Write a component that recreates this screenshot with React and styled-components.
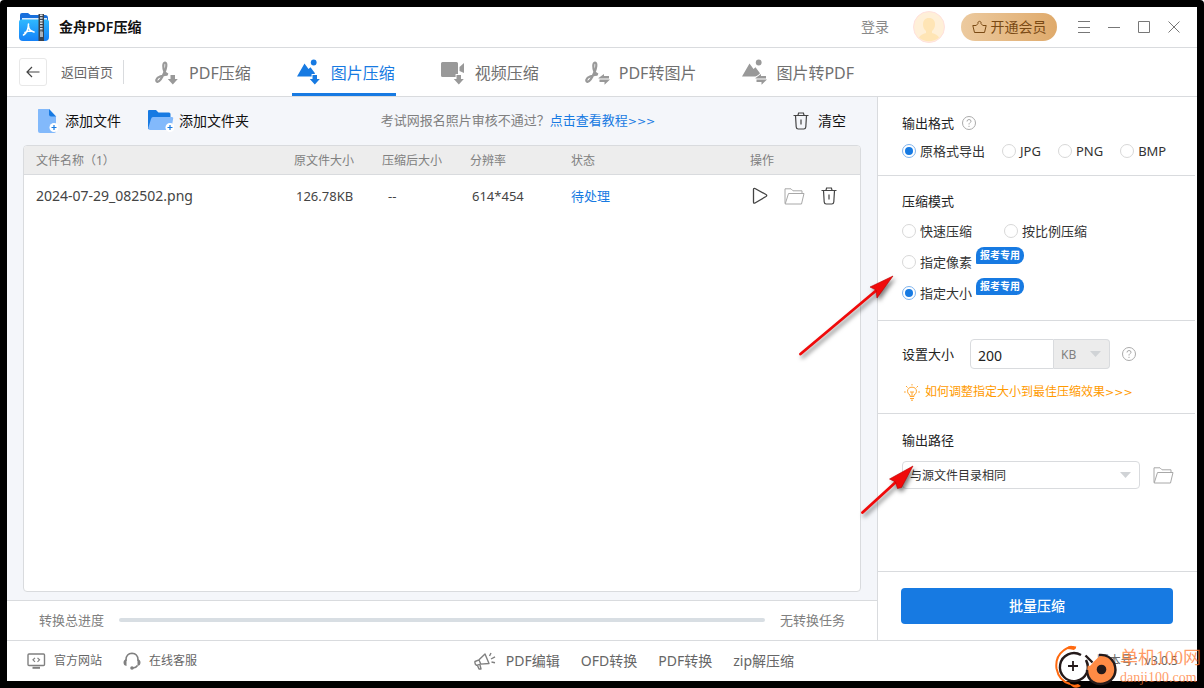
import React from 'react';
import styled, { createGlobalStyle, css } from 'styled-components';

const color = {
  blue: '#177ae2',
  line: '#d9dbde',
  soft: '#f4f6fa',
  text: '#333333',
  grey: '#666666',
  faint: '#808080',
  orange: '#ff9a00',
};

const GlobalStyle = createGlobalStyle`
  *, *::before, *::after { box-sizing: border-box; }
  body {
    margin: 0;
    background: #fff;
    color: ${color.text};
    font: 13px/20px "Noto Sans", "Noto Sans CJK SC", sans-serif;
  }
  button, input, select { font: inherit; color: inherit; margin: 0; }
  button { border: 0; padding: 0; background: none; cursor: pointer; }
  a { color: inherit; text-decoration: none; }
  svg { display: block; flex: none; }
`;

const Frame = styled.div`
  position: relative;
  display: flex;
  min-height: 100vh;
  padding: 7px;
  background: #000;
  border-radius: 4px 4px 0 0;
  overflow: hidden;
`;

const Window = styled.div`
  flex: 1;
  min-width: 0;
  display: flex;
  flex-direction: column;
  background: #fff;
`;

const TitleBar = styled.header`
  display: flex;
  align-items: center;
  height: 41px;
  padding: 0 16px 0 12px;
  border-bottom: 1px solid ${color.line};
`;

const AppName = styled.h1`
  flex: 1;
  margin: 0 0 0 10px;
  font-size: 14px;
  line-height: 20px;
  font-weight: 600;
  color: #111;
`;

const LoginButton = styled.button`
  font-size: 14px;
  color: #888;
`;

const Avatar = styled.button`
  margin: 0 16px 0 24px;
`;

const VipButton = styled.button`
  display: flex;
  align-items: center;
  justify-content: center;
  gap: 4px;
  width: 96px;
  height: 28px;
  border-radius: 14px;
  background: linear-gradient(90deg, #ecca9f, #dfaa6b);
  color: #7a4a14;
  font-size: 14px;
`;

const WindowControls = styled.div`
  display: flex;
  gap: 16px;
  margin-left: 20px;
`;

const Nav = styled.nav`
  display: flex;
  align-items: center;
  height: 49px;
  padding-left: 12px;
  border-bottom: 1px solid ${color.line};
`;

const BackButton = styled.button`
  display: flex;
  align-items: center;
  gap: 14px;
  height: 24px;
  padding-right: 10px;
  border-right: 1px solid ${color.line};
  color: ${color.grey};
`;

const BackBox = styled.span`
  display: grid;
  place-items: center;
  width: 28px;
  height: 28px;
  border: 1px solid #e8e8e8;
  border-radius: 3px;
`;

const Tabs = styled.div`
  display: flex;
  align-self: stretch;
  gap: 40px;
  margin-left: 26px;
`;

const Tab = styled.button`
  display: flex;
  align-items: center;
  gap: 10px;
  padding: 5px 1px 0 5px;
  border-bottom: 3px solid ${(p) => (p.$active ? color.blue : 'transparent')};
  font-size: 16px;
  color: ${(p) => (p.$active ? color.blue : '#707070')};
  svg { color: ${(p) => (p.$active ? color.blue : '#999')}; }
`;

const Main = styled.main`
  flex: 1;
  display: flex;
`;

const Workspace = styled.section`
  flex: 1;
  min-width: 0;
  display: flex;
  flex-direction: column;
  background: ${color.soft};
`;

const Toolbar = styled.div`
  display: flex;
  align-items: center;
  justify-content: space-between;
  height: 48px;
  padding: 0 31px 0 30px;
`;

const ToolGroup = styled.div`
  display: flex;
  gap: 27px;
`;

const ToolButton = styled.button`
  display: flex;
  align-items: center;
  gap: ${(p) => p.$gap || 5}px;
  font-size: 14px;
  color: #111;
`;

const Notice = styled.p`
  margin: 0 6px 0 0;
  color: ${color.faint};
`;

const NoticeLink = styled.a`
  color: ${color.blue};
`;

const Chevrons = styled.span`
  font-family: "DejaVu Sans", sans-serif;
  font-size: 11px;
`;

const TableCard = styled.div`
  flex: 1;
  margin: 0 16px 8px;
  border: 1px solid ${color.line};
  border-radius: 4px;
  background: #fff;
  overflow: hidden;
`;

const FileTable = styled.table`
  width: 100%;
  table-layout: fixed;
  border-collapse: separate;
  border-spacing: 0;
`;

const HeadCell = styled.th`
  width: ${(p) => (p.$width ? `${p.$width}px` : 'auto')};
  height: 29px;
  padding: 2px 0 0 12px;
  border-bottom: 1px solid ${color.line};
  background: #ededed;
  font-size: 12px;
  font-weight: 400;
  text-align: left;
  color: ${color.faint};
`;

const Cell = styled.td`
  height: 42px;
  padding: 0 0 0 ${(p) => p.$inset || 12}px;
  font-size: ${(p) => (p.$name ? 14 : 13)}px;
  color: ${(p) => (p.$link ? color.blue : '#444')};
`;

const RowActions = styled.div`
  display: flex;
  align-items: center;
  gap: 16px;
`;

const ProgressBar = styled.div`
  display: flex;
  align-items: center;
  gap: 15px;
  height: 40px;
  padding: 0 32px 2px;
  border-top: 1px solid ${color.line};
  background: #fff;
  color: ${color.faint};
`;

const Progress = styled.progress`
  flex: 1;
  min-width: 0;
  height: 4px;
  appearance: none;
  border: 0;
  border-radius: 2px;
  overflow: hidden;
  background: #d8dee3;
  &::-webkit-progress-bar { background: #d8dee3; }
  &::-webkit-progress-value { background: ${color.blue}; }
`;

const SidePanel = styled.aside`
  position: relative;
  width: 320px;
  display: flex;
  flex-direction: column;
  border-left: 1px solid ${color.line};
`;

const Group = styled.section`
  margin-right: 2px;
  padding: ${(p) => p.$pad || '12px 0 10px'};
  padding-left: 24px;
  ${(p) => (p.$grow ? css`flex: 1;` : css`border-bottom: 1px solid ${color.line};`)}
`;

const GroupTitle = styled.h2`
  display: flex;
  align-items: center;
  gap: 8px;
  margin: 0;
  font-size: 13px;
  font-weight: 400;
  line-height: 28px;
  color: #222;
`;

const OptionRow = styled.div`
  display: flex;
  align-items: center;
  gap: ${(p) => p.$gap || 17}px;
  height: ${(p) => p.$height || 31}px;
`;

const Option = styled.label`
  display: flex;
  align-items: center;
  gap: 4px;
  white-space: nowrap;
`;

const Radio = styled.input.attrs({ type: 'radio' })`
  appearance: none;
  width: 14px;
  height: 14px;
  padding: 2px;
  border: 1px solid #d8d8d8;
  border-radius: 50%;
  background-clip: content-box;
  &:checked {
    border-color: #7fb4ee;
    background-color: ${color.blue};
  }
`;

const Badge = styled.span`
  align-self: flex-start;
  width: 48px;
  height: 17px;
  margin-top: 1px;
  border-radius: 8px 8px 8px 1px;
  background: ${color.blue};
  color: #fff;
  font-size: 10px;
  font-weight: 600;
  line-height: 17px;
  text-align: center;
`;

const SizeField = styled.div`
  display: flex;
  align-items: center;
  color: #222;
`;

const SizeInput = styled.input`
  width: 84px;
  height: 30px;
  margin-left: 16px;
  padding: 2px 0 0 7px;
  border: 1px solid ${color.line};
  border-radius: 4px 0 0 4px;
  font-size: 14px;
  color: #222;
`;

const SelectWrap = styled.span`
  position: relative;
  width: ${(p) => (p.$unit ? '56px' : '238px')};
  svg {
    position: absolute;
    right: 9px;
    top: 50%;
    margin-top: -3px;
    pointer-events: none;
  }
`;

const Select = styled.select`
  display: block;
  width: 100%;
  height: 28px;
  padding: 1px 20px 0 7px;
  appearance: none;
  border: 1px solid ${color.line};
  border-radius: 4px;
  background: #fff;
  font-size: 12px;
  color: #333;
  ${(p) =>
    p.$unit &&
    css`
      height: 30px;
      border-left: 0;
      border-radius: 0 4px 4px 0;
      background: #ececec;
      color: ${color.faint};
    `}
`;

const HelpButton = styled.button`
  margin-left: ${(p) => (p.$spaced ? 12 : 0)}px;
`;

const HintLink = styled.a`
  display: flex;
  align-items: center;
  gap: 5px;
  height: 44px;
  padding: 2px 0 0 2px;
  font-size: 12px;
  color: ${color.orange};
`;

const PathRow = styled.div`
  display: flex;
  align-items: center;
  gap: 13px;
  margin-top: 7px;
`;

const StartArea = styled.div`
  padding: 16px 24px 16px 23px;
  border-top: 1px solid ${color.line};
`;

const StartButton = styled.button`
  width: 100%;
  height: 36px;
  border-radius: 4px;
  background: ${color.blue};
  color: #fff;
  font-size: 14px;
  font-weight: 500;
`;

const Footer = styled.footer`
  display: flex;
  align-items: center;
  justify-content: space-between;
  height: 41px;
  padding: 0 19px 0 20px;
  border-top: 1px solid ${color.line};
  font-size: 12px;
  color: ${color.grey};
`;

const FooterLinks = styled.div`
  display: flex;
  align-items: center;
  gap: 21px;
  ${(p) => p.$products && css`margin-right: 26px; font-size: 14px;`}
`;

const FooterLink = styled.a`
  display: flex;
  align-items: center;
  gap: ${(p) => p.$gap || 8}px;
`;

const Pointer = styled.svg`
  position: absolute;
  left: ${(p) => p.$left}px;
  top: ${(p) => p.$top}px;
  overflow: visible;
  pointer-events: none;
  filter: drop-shadow(2px 3px 2px rgba(0, 0, 0, 0.5));
`;

const Watermark = styled.div`
  position: absolute;
  right: 0;
  bottom: 0;
  display: flex;
  align-items: flex-end;
  gap: 3px;
  pointer-events: none;
`;

const WatermarkText = styled.div`
  width: 84px;
  font-family: "Liberation Serif", "Noto Sans CJK SC", serif;
  font-size: ${(p) => (p.$small ? 14 : 18)}px;
  line-height: 20px;
  white-space: nowrap;
  color: rgba(255, 122, 50, 0.75);
`;

const pdfStroke =
  'M9.5 11C7.8 7 7.800 1.800 10 1.500C12.500 2 11 8 9.500 11C7.500 16 5 20.500 2.500 20.800C.3 20.500 1 17 5 15.500C8 14.300 11 13.300 12.500 14M9.500 10.500C10.300 12 11.500 13 13 13.500';
const downArrow = 'M15.500 14h4.500v4h2.800l-5 5.500-5-5.500h2.700z';
const swapArrows = 'M13.500 17l5.500-4v2h5v2.500H13.500zM25 18.500H14.500v2.500h5v2.800z';
const photo = 'M0 15.500L7.500 2.500l4 5.500 2-1.800 4.300 5.800v3.500z';

const CornerGlyph = ({ d }) => (
  <path d={d} fill="currentColor" stroke="#fff" strokeWidth="1.800" paintOrder="stroke" />
);

const PdfGlyph = ({ corner }) => (
  <svg width="24" height="24" viewBox="0 0 24 24" overflow="visible" aria-hidden="true">
    <path d={pdfStroke} fill="none" stroke="currentColor" strokeWidth="2.200" />
    <CornerGlyph d={corner} />
  </svg>
);

const PhotoGlyph = ({ corner }) => (
  <svg width="24" height="24" viewBox="0 0 24 24" overflow="visible" aria-hidden="true">
    <path d={photo} fill="currentColor" />
    <circle cx="16.700" cy="1.500" r="2.900" fill="currentColor" />
    <CornerGlyph d={corner} />
  </svg>
);

const VideoGlyph = () => (
  <svg width="24" height="24" viewBox="0 0 24 24" aria-hidden="true">
    <path d="M1.500 1h14a1.500 1.500 0 0 1 1.500 1.500V16H1.500A1.500 1.500 0 0 1 0 14.500v-12A1.500 1.500 0 0 1 1.500 1zM18.500 6L23 2v10l-4.500-2z" fill="currentColor" />
    <CornerGlyph d={downArrow} />
  </svg>
);

const Logo = () => (
  <svg width="30" height="30" viewBox="0 0 30 30" aria-hidden="true">
    <defs>
      <linearGradient id="logoFront" x1="0" y1="0" x2="0" y2="1">
        <stop offset="0" stopColor="#2fb9ff" />
        <stop offset="1" stopColor="#1581f7" />
      </linearGradient>
    </defs>
    <path d="M1 3q0-2 2-2h6l2.500 2H26q3 0 3 3v10H1z" fill="#176fdc" />
    <path d="M3 6h25v4H3z" fill="#d8ecff" />
    <path d="M0 10q0-2.500 2.500-2.500h25Q30 7.500 30 10v15q0 4-4 4H4q-4 0-4-4z" fill="url(#logoFront)" />
    <path d="M19.500 2h5.500v27h-5.500z" fill="#3b424c" />
    <path d="M22.300 2.500v17" stroke="#dfe5ea" strokeWidth="2.600" strokeDasharray="1.500 1.200" />
    <path d="M21 20h3v5h-3z" fill="#a9b2bc" />
    <path d="M9.500 12c0 5-2 9-5 11M9.500 14c0 3 2 5 5.500 6M6 20.500c2-1.200 4-1.600 7-1.500" fill="none" stroke="#fff" strokeWidth="1.600" strokeLinecap="round" />
  </svg>
);

const AvatarGlyph = () => (
  <svg width="32" height="32" viewBox="0 0 32 32" aria-hidden="true">
    <circle cx="16" cy="16" r="15.500" fill="#fff0d8" stroke="#ffe0dc" />
    <path d="M16 7c4 0 6 2.500 6 6.500 0 3-1.200 5-3 6.500v2c3 1 6 2 7 4.500-5.500 5-14.500 5-20 0 1-2.500 4-3.500 7-4.500v-2c-1.800-1.500-3-3.500-3-6.500C10 9.500 12 7 16 7z" fill="#ffe5b5" />
  </svg>
);

const CrownGlyph = () => (
  <svg width="15" height="14" viewBox="0 0 15 14" fill="none" stroke="currentColor" strokeLinejoin="round" aria-hidden="true">
    <path d="M2.500 12.500L.8 5.500h3.400L6 3.500a1.600 1.600 0 1 1 3 0l1.800 2h3.400l-1.700 7z" />
  </svg>
);

const ControlGlyph = ({ d }) => (
  <svg width="14" height="14" viewBox="0 0 14 14" fill="none" stroke="#777" aria-hidden="true">
    <path d={d} />
  </svg>
);

const PlusBadge = ({ x, y }) => (
  <g transform={`translate(${x} ${y})`}>
    <circle r="4.500" fill="#fff" />
    <path d="M-2.500 0h5M0-2.500v5" stroke={color.blue} strokeWidth="1.200" />
  </g>
);

const FileGlyph = () => (
  <svg width="23" height="24" viewBox="0 0 23 24" aria-hidden="true">
    <path d="M1.500 0H12l7 7.500V22q0 2-2 2H3q-2 0-2-2V1q0-1 .5-1z" fill="#82b9fb" />
    <path d="M12 0l7 7.500h-5q-2 0-2-2z" fill={color.blue} />
    <PlusBadge x={17} y={18.5} />
  </svg>
);

const AddFolderGlyph = () => (
  <svg width="26" height="24" viewBox="0 0 26 24" aria-hidden="true">
    <path d="M0 2q0-1 1-1h7l2.500 2.500H21q1.500 0 1.500 1.500v5L2 20H0z" fill={color.blue} />
    <path d="M5 8h19q1.500 0 1.200 1.500L23.500 19q-.3 2-2 2H2q-2 0-1.700-2L3 10q.5-2 2-2z" fill="#82b9fb" />
    <PlusBadge x={22} y={18.5} />
  </svg>
);

const TrashGlyph = () => (
  <svg width="16" height="18" viewBox="0 0 16 18" fill="none" stroke="#444" strokeWidth="1.200" aria-hidden="true">
    <path d="M.5 3.500h15M5 3.200l.6-2.200h4.800l.6 2.200M2.500 3.500l.7 11.500q.2 2 2 2h5.600q1.800 0 2-2l.7-11.500M8 7.500v5" />
  </svg>
);

const PlayGlyph = () => (
  <svg width="16" height="18" viewBox="0 0 16 18" fill="none" stroke="#444" strokeWidth="1.300" strokeLinejoin="round" aria-hidden="true">
    <path d="M1.500 2.500q0-1.500 1.500-1l11 6q1.500 1 0 2L3 16q-1.500.7-1.500-1z" />
  </svg>
);

const FolderGlyph = () => (
  <svg width="21" height="17" viewBox="0 0 21 17" fill="none" stroke="#a8a8a8" strokeLinejoin="round" aria-hidden="true">
    <path d="M1 15.500V.8h6l2 2h9v3M4.500 5.500H20L17.500 16H1.200z" />
  </svg>
);

const HelpGlyph = () => (
  <svg width="14" height="14" viewBox="0 0 14 14" fill="none" stroke="#aaa" aria-hidden="true">
    <circle cx="7" cy="7" r="6.500" />
    <path d="M5 5.500Q5 3.500 7 3.500T9 5.300Q9 6.200 7.800 6.800 7 7.300 7 8.500M7 9.800v1.200" />
  </svg>
);

const Caret = () => (
  <svg width="11" height="6" viewBox="0 0 11 6" aria-hidden="true">
    <path d="M0 0h11L5.500 6z" fill="#d0d3d6" />
  </svg>
);

const BulbGlyph = () => (
  <svg width="16" height="17" viewBox="0 0 16 17" fill="none" stroke="#ffa733" aria-hidden="true">
    <path d="M6 12.500v-1.500Q3.500 9.800 3.500 7.300 3.700 3.300 8 3.200q4.300.1 4.500 4.100 0 2.500-2.500 3.700v1.500zM6 14.500h4M7 16.200h2M6 8h4M8 8v4M8 0v1.500M2 2l1.500 1.500M14 2l-1.500 1.500M0 8h1.800M14.200 8H16" />
  </svg>
);

const MonitorGlyph = () => (
  <svg width="19" height="16" viewBox="0 0 19 16" fill="none" stroke="#808080" strokeWidth="1.400" aria-hidden="true">
    <rect x="1" y="1" width="16.500" height="11.500" rx="1" />
    <path d="M5.500 14.800h7.500" strokeWidth="2" />
    <path d="M8 4.800L6 6.800l2 2M10.500 4.800l2 2-2 2" strokeWidth="1.200" />
  </svg>
);

const HeadsetGlyph = () => (
  <svg width="18" height="18" viewBox="0 0 18 18" fill="none" stroke="#808080" strokeWidth="1.500" aria-hidden="true">
    <path d="M3 9V7.500Q3.300 1.500 9 1.200q5.700.3 6 6.300V9M14.500 13.500Q13 16 10 16" />
    <path d="M3.500 7v7Q.5 13.500.5 10.500T3.500 7zM14.500 7v7q3-.5 3-3.500T14.500 7z" fill="#808080" stroke="none" />
    <circle cx="9" cy="16" r="1.800" fill="#808080" stroke="none" />
  </svg>
);

const HornGlyph = () => (
  <svg width="22" height="18" viewBox="0 0 22 18" fill="none" stroke="#808080" strokeWidth="1.400" strokeLinejoin="round" aria-hidden="true">
    <path d="M1 9.500l4-1.700L11 2l4 9.500-8.500.6-4 1.200Q.5 12 1 9.500zM5 8l2 4.500M3.500 13.500l1.500 3.500h2l-1-4M15.500 4l1.500-3M17 7l4-2.200M17.500 10l3.500.7" />
  </svg>
);

const WatermarkMark = () => (
  <svg width="62" height="43" viewBox="0 0 62 43" fill="none" aria-hidden="true">
    <path d="M21 2.500Q14 .5 8.500 5.500 0 12 1.500 23.500 4 36 15 39" stroke="#ff6a10" strokeWidth="2" />
    <path d="M11 4q4-6 10-1l-2 2q-4-1-8-1zM13 37q4 4 10 2l3 2q-7 5-13-4z" fill="#ff6a10" />
    <circle cx="18" cy="21.500" r="14" fill="#fff" />
    <path d="M26 10A14 14 0 1 0 31 15Q34 22 32 27M30.500 10.500l7 7" stroke="#241a1a" strokeWidth="2.400" />
    <path d="M13 21h10M18 16v10" stroke="#241a1a" strokeWidth="1.800" />
    <path d="M46 10a14.500 14.500 0 1 1-13 10q1 2 3 0 3-4 10-10z" fill="#ff8b45" />
    <path d="M44 10q10-1 15 8 4 10-3 17-9 7-18 2-6-4-6-12" stroke="#241a1a" strokeWidth="2.400" />
    <circle cx="46.500" cy="24.500" r="4.800" fill="#241a1a" />
  </svg>
);

const tabs = [
  { label: 'PDF压缩', icon: <PdfGlyph corner={downArrow} /> },
  { label: '图片压缩', active: true, icon: <PhotoGlyph corner={downArrow} /> },
  { label: '视频压缩', icon: <VideoGlyph /> },
  { label: 'PDF转图片', icon: <PdfGlyph corner={swapArrows} /> },
  { label: '图片转PDF', icon: <PhotoGlyph corner={swapArrows} /> },
];

const columns = [
  { label: '文件名称（1）' },
  { label: '原文件大小', width: 88 },
  { label: '压缩后大小', width: 88 },
  { label: '分辨率', width: 101 },
  { label: '状态', width: 179 },
  { label: '操作', width: 122 },
];

const formats = ['原格式导出', 'JPG', 'PNG', 'BMP'];

const controls = [
  { name: '菜单', d: 'M1 1.500h12M1 7.500h12M1 12.500h12' },
  { name: '最小化', d: 'M1 7.500h12' },
  { name: '最大化', d: 'M1.500 1.500h11v11h-11z' },
  { name: '关闭', d: 'M1.500 1.500l11 11M12.500 1.500l-11 11' },
];

const ModeOption = ({ label, checked }) => (
  <Option>
    <Radio name="mode" defaultChecked={checked} />
    {label}
  </Option>
);

export default function App() {
  return (
    <>
      <GlobalStyle />
      <Frame>
        <Window>
          <TitleBar>
            <Logo />
            <AppName>金舟PDF压缩</AppName>
            <LoginButton>登录</LoginButton>
            <Avatar aria-label="头像"><AvatarGlyph /></Avatar>
            <VipButton><CrownGlyph />开通会员</VipButton>
            <WindowControls>
              {controls.map((c) => (
                <button key={c.name} aria-label={c.name}><ControlGlyph d={c.d} /></button>
              ))}
            </WindowControls>
          </TitleBar>

          <Nav>
            <BackButton>
              <BackBox>
                <svg width="14" height="12" viewBox="0 0 14 12" fill="none" stroke="#444" strokeWidth="1.200" aria-hidden="true">
                  <path d="M13.500 6H1M6 1L1 6l5 5" />
                </svg>
              </BackBox>
              返回首页
            </BackButton>
            <Tabs>
              {tabs.map((t) => (
                <Tab key={t.label} $active={t.active}>{t.icon}{t.label}</Tab>
              ))}
            </Tabs>
          </Nav>

          <Main>
            <Workspace>
              <Toolbar>
                <ToolGroup>
                  <ToolButton><FileGlyph />添加文件</ToolButton>
                  <ToolButton><AddFolderGlyph />添加文件夹</ToolButton>
                </ToolGroup>
                <Notice>
                  考试网报名照片审核不通过？<NoticeLink href="#guide">点击查看教程<Chevrons>&gt;&gt;&gt;</Chevrons></NoticeLink>
                </Notice>
                <ToolButton $gap={9}><TrashGlyph />清空</ToolButton>
              </Toolbar>

              <TableCard>
                <FileTable>
                  <thead>
                    <tr>
                      {columns.map((c) => (
                        <HeadCell key={c.label} $width={c.width}>{c.label}</HeadCell>
                      ))}
                    </tr>
                  </thead>
                  <tbody>
                    <tr>
                      <Cell $name>2024-07-29_082502.png</Cell>
                      <Cell $inset={14}>126.78KB</Cell>
                      <Cell $inset={18}>--</Cell>
                      <Cell $inset={14}>614*454</Cell>
                      <Cell $link>待处理</Cell>
                      <Cell $inset={14}>
                        <RowActions>
                          <button aria-label="开始"><PlayGlyph /></button>
                          <button aria-label="打开文件夹"><FolderGlyph /></button>
                          <button aria-label="删除"><TrashGlyph /></button>
                        </RowActions>
                      </Cell>
                    </tr>
                  </tbody>
                </FileTable>
              </TableCard>

              <ProgressBar>
                <label htmlFor="total">转换总进度</label>
                <Progress id="total" value="0" max="100" />
                <span>无转换任务</span>
              </ProgressBar>
            </Workspace>

            <SidePanel>
              <Group>
                <GroupTitle>
                  输出格式
                  <HelpButton aria-label="格式说明"><HelpGlyph /></HelpButton>
                </GroupTitle>
                <OptionRow $height={28}>
                  {formats.map((f, i) => (
                    <Option key={f}>
                      <Radio name="format" defaultChecked={i === 0} />
                      {f}
                    </Option>
                  ))}
                </OptionRow>
              </Group>

              <Group $pad="11px 0 12px">
                <GroupTitle>压缩模式</GroupTitle>
                <OptionRow $gap={32}>
                  <ModeOption label="快速压缩" />
                  <ModeOption label="按比例压缩" />
                </OptionRow>
                <OptionRow $gap={4}>
                  <ModeOption label="指定像素" />
                  <Badge>报考专用</Badge>
                </OptionRow>
                <OptionRow $gap={4}>
                  <ModeOption label="指定大小" checked />
                  <Badge>报考专用</Badge>
                </OptionRow>
              </Group>

              <Group $pad="18px 0 0">
                <SizeField>
                  <label htmlFor="size">设置大小</label>
                  <SizeInput id="size" defaultValue="200" />
                  <SelectWrap $unit>
                    <Select $unit aria-label="单位" defaultValue="KB">
                      <option>KB</option>
                    </Select>
                    <Caret />
                  </SelectWrap>
                  <HelpButton $spaced aria-label="大小说明"><HelpGlyph /></HelpButton>
                </SizeField>
                <HintLink href="#hint">
                  <BulbGlyph />
                  <span>如何调整指定大小到最佳压缩效果<Chevrons>&gt;&gt;&gt;</Chevrons></span>
                </HintLink>
              </Group>

              <Group $grow>
                <GroupTitle as="label" htmlFor="path">输出路径</GroupTitle>
                <PathRow>
                  <SelectWrap>
                    <Select id="path">
                      <option>与源文件目录相同</option>
                    </Select>
                    <Caret />
                  </SelectWrap>
                  <button aria-label="浏览"><FolderGlyph /></button>
                </PathRow>
              </Group>

              <StartArea>
                <StartButton>批量压缩</StartButton>
              </StartArea>

              <Pointer $left={-79} $top={178} width="95" height="80" viewBox="0 0 95 80" aria-hidden="true">
                <path d="M1.500 79L79 14" stroke="#f00a0a" strokeWidth="2.800" strokeLinecap="round" />
                <path d="M94 1L71 12l6 3 1 8z" fill="#f00a0a" stroke="#b00" strokeWidth=".6" />
              </Pointer>
              <Pointer $left={-17} $top={368} width="52" height="48" viewBox="0 0 52 48" aria-hidden="true">
                <path d="M1.500 47.500L36 16" stroke="#f00a0a" strokeWidth="2.800" strokeLinecap="round" />
                <path d="M52 1L28.500 14l6 3 2 6.500 4-1z" fill="#f00a0a" stroke="#b00" strokeWidth=".6" />
              </Pointer>
            </SidePanel>
          </Main>

          <Footer>
            <FooterLinks>
              <FooterLink href="#site"><MonitorGlyph />官方网站</FooterLink>
              <FooterLink href="#service"><HeadsetGlyph />在线客服</FooterLink>
            </FooterLinks>
            <FooterLinks $products>
              <FooterLink href="#edit" $gap={10}><HornGlyph />PDF编辑</FooterLink>
              <FooterLink href="#ofd">OFD转换</FooterLink>
              <FooterLink href="#convert">PDF转换</FooterLink>
              <FooterLink href="#zip">zip解压缩</FooterLink>
            </FooterLinks>
            <span>版本号：v3.0.5</span>
          </Footer>
        </Window>

        <Watermark>
          <WatermarkMark />
          <div>
            <WatermarkText>单机100网</WatermarkText>
            <WatermarkText $small>danji100.com</WatermarkText>
          </div>
        </Watermark>
      </Frame>
    </>
  );
}
